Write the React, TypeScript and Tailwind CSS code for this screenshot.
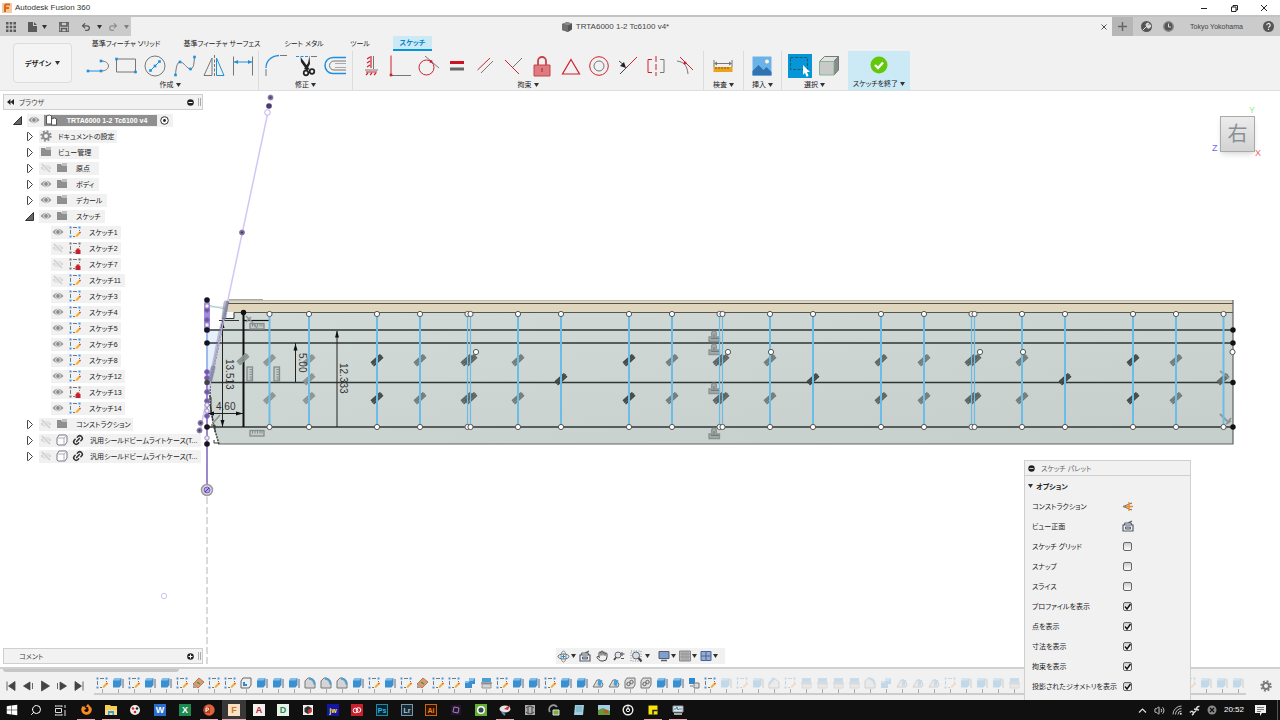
import type { ReactNode } from "react";
import { FaWindows, FaFirefoxBrowser } from "react-icons/fa";
import { Search, Volume2, Link2, Hand, Undo2, Redo2 } from "lucide-react";

const BLUE = "#1c8fe0";
const GRAY = "#777";
const RED = "#cf2030";

function Icon({ size = 24, children }: { size?: number; children: ReactNode }) {
  return (
    <svg width={size} height={size} viewBox={`0 0 ${size} ${size}`} fill="none" className="block shrink-0">
      {children}
    </svg>
  );
}

function Caret() {
  return (
    <svg width="5" height="4" viewBox="0 0 5 4" className="shrink-0">
      <path d="M0 0h5L2.5 4z" fill="#333" />
    </svg>
  );
}

function Gear({ color }: { color: string }) {
  return (
    <Icon size={12}>
      <circle cx="6" cy="6" r="3" stroke={color} strokeWidth="2" />
      <circle cx="6" cy="6" r="4.800" stroke={color} strokeWidth="1.800" strokeDasharray="1.900 1.870" />
    </Icon>
  );
}

function Dots({ points, r = 1.3, fill = BLUE }: { points: number[][]; r?: number; fill?: string }) {
  return (
    <>
      {points.map(([x, y], i) => (
        <rect key={i} x={x - r} y={y - r} width={r * 2} height={r * 2} fill={fill} />
      ))}
    </>
  );
}

/* ---------- ribbon icons ---------- */

const createIcons = [
  {
    name: "線分",
    art: (
      <>
        <path d="M3 17h13" stroke={BLUE} />
        <path d="M16 17c10 0 10-10 0-10" stroke={GRAY} />
        <Dots points={[[3, 17], [16, 17], [16, 7]]} />
      </>
    ),
  },
  {
    name: "長方形",
    art: (
      <>
        <path d="M2.500 5h19v13h-19z" stroke={GRAY} />
        <Dots points={[[2.5, 5], [21.5, 18]]} />
      </>
    ),
  },
  {
    name: "円",
    art: (
      <>
        <circle cx="12" cy="12" r="10" stroke={GRAY} />
        <path d="M7 17L17 7" stroke={BLUE} />
        <Dots points={[[7.500, 16.5], [12, 12], [16.5, 7.5]]} />
      </>
    ),
  },
  {
    name: "スプライン",
    art: (
      <>
        <path d="M2.500 21C3 14 4 8 7 8c4 0 7 7 10.500 7S21 8 21.500 3" stroke={GRAY} />
        <Dots points={[[2.5, 21], [7, 8], [17.5, 15], [21.5, 3]]} />
      </>
    ),
  },
  {
    name: "ミラー",
    art: (
      <>
        <path d="M10 4v17.500H2z" stroke={GRAY} />
        <path d="M12.500 1v22" stroke={GRAY} strokeDasharray="3 1.500" />
        <path d="M14.500 4v17.500H22z" stroke={BLUE} />
      </>
    ),
  },
  {
    name: "スケッチ寸法",
    art: (
      <>
        <path d="M2.500 2.500v19M21.500 2.500v19" stroke={GRAY} />
        <path d="M3 8h18" stroke={BLUE} />
        <path d="M3 8l4-2v4zM21 8l-4-2v4z" fill={BLUE} />
      </>
    ),
  },
];

const modifyIcons = [
  {
    name: "フィレット",
    art: (
      <>
        <path d="M2 14C2 7 7 2 15 1.500" stroke={BLUE} strokeWidth="1.300" />
        <path d="M16 1.500h7M2 15v7" stroke={GRAY} />
      </>
    ),
  },
  {
    name: "トリム",
    art: (
      <>
        <path d="M2 2.500h14" stroke={BLUE} strokeDasharray="3 1.500" />
        <path d="M17 2.500h6" stroke={GRAY} />
        <path d="M6.500 3l9 12-2.500 1.500L7 8zM15.500 2l.5 8-3.500 6-2.500-1 4-6z" fill="#222" />
        <circle cx="12" cy="19" r="2.300" stroke="#222" strokeWidth="1.700" />
        <circle cx="18" cy="17.500" r="2.300" stroke="#222" strokeWidth="1.700" />
      </>
    ),
  },
  {
    name: "オフセット",
    art: (
      <>
        <path d="M23 3.500H10a8 8 0 0 0 0 16h13" stroke={BLUE} strokeWidth="1.500" />
        <path d="M23 7H11a4.500 4.500 0 0 0 0 9h12" stroke={GRAY} />
        <path d="M23 9.500H12M23 13.500H12" stroke="#aaa" />
      </>
    ),
  },
];

const constraintIcons = [
  {
    name: "水平/垂直",
    art: (
      <>
        <path d="M14.500 2v13M6 16h13" stroke={GRAY} />
        <path d="M12 2v12M8 5l3-2M8 9l3-2M8 13l3-2M7 18h11M7 21l2-2M11 21l2-2M15 21l2-2" stroke={RED} strokeWidth="1.200" />
      </>
    ),
  },
  {
    name: "一致",
    art: (
      <>
        <path d="M3 1.500V21" stroke={RED} />
        <path d="M4 21.500h19" stroke={GRAY} />
        <Dots points={[[3, 21]]} fill={RED} />
      </>
    ),
  },
  {
    name: "接線",
    art: (
      <>
        <path d="M9 2l14 12" stroke={GRAY} />
        <circle cx="10.500" cy="13.500" r="7.500" stroke={RED} />
        <Dots points={[[15, 7.500]]} fill={RED} />
      </>
    ),
  },
  {
    name: "等しい",
    art: (
      <>
        <path d="M5 8.500h14" stroke="#cf1020" strokeWidth="3" />
        <path d="M5 15h14" stroke="#666" strokeWidth="3" />
      </>
    ),
  },
  {
    name: "平行",
    art: (
      <>
        <path d="M4.500 16L17 4" stroke={RED} />
        <path d="M8 19L20 7" stroke={GRAY} />
      </>
    ),
  },
  {
    name: "直交",
    art: (
      <>
        <path d="M11 13l9-9" stroke={GRAY} />
        <path d="M3 6l14 14" stroke={RED} />
      </>
    ),
  },
  {
    name: "固定",
    art: (
      <>
        <path d="M8 11V7a4 4 0 0 1 8 0v4" stroke="#c94048" strokeWidth="1.800" />
        <path d="M4 11h16v11H4z" fill="#dd7c80" stroke="#c94048" />
        <path d="M12 14v4" stroke="#b02030" />
      </>
    ),
  },
  { name: "中点", art: <path d="M12 5.500l8.500 14.500h-17z" stroke={RED} strokeWidth="1.200" /> },
  {
    name: "同心円",
    art: (
      <>
        <circle cx="12" cy="12" r="9.300" stroke={RED} />
        <circle cx="12" cy="12" r="5" stroke={GRAY} />
      </>
    ),
  },
  {
    name: "同一直線上",
    art: (
      <>
        <path d="M3 7l5 4M4 20l8-8" stroke="#444" />
        <path d="M10 14l-6-2 4-4z" fill="#222" />
        <path d="M12 12l9-9" stroke={RED} />
      </>
    ),
  },
  {
    name: "対称",
    art: (
      <>
        <path d="M8 5.500H4v13h4" stroke={RED} />
        <path d="M16 5.500h4v13h-4" stroke={GRAY} />
        <path d="M12 2v20" stroke={RED} strokeDasharray="6 2" />
      </>
    ),
  },
  {
    name: "曲率",
    art: (
      <>
        <path d="M4 7c6 1 10 3 11 13" stroke={GRAY} />
        <path d="M7 3l13 13" stroke={RED} />
        <Dots points={[[12, 9]]} fill={RED} />
      </>
    ),
  },
];

const inspectIcons = [
  {
    name: "計測",
    art: (
      <>
        <path d="M3 6v7M21 6v7M4 9.500h16" stroke={GRAY} />
        <path d="M3 9.500l3-2v4zM21 9.500l-3-2v4z" fill={GRAY} />
        <path d="M2.500 13h19v5h-19z" fill="#eca21c" />
        <path d="M5 13v2M8 13v2M11 13v2M14 13v2M17 13v2" stroke="#85580a" />
      </>
    ),
  },
];

const insertIcons = [
  {
    name: "キャンバス",
    art: (
      <>
        <path d="M2.500 2.500h19v19h-19z" fill="#6cb2ea" />
        <path d="M2.500 17l6-6 5 5 3-3 5 5v3.500h-19z" fill="#2f74b0" />
        <circle cx="17" cy="7.500" r="2" fill="#fff6d0" />
      </>
    ),
  },
];

const selectIcons = [
  {
    name: "選択",
    art: (
      <>
        <path d="M0 0h24v24H0z" fill="#0696d7" />
        <path d="M2.500 3.500h17v12h-17z" stroke="#0d5c78" strokeDasharray="3 1.500" />
        <path d="M15 11l7 7h-3l1.500 4-2 .8-1.500-4-2 2z" fill="#fff" />
      </>
    ),
  },
  {
    name: "ボディ",
    art: (
      <>
        <path d="M2.500 7.500l5-5h14l-4.500 5z" fill="#e2e2e2" stroke="#777" />
        <path d="M17 7.500l4.500-5v13.500l-4.500 5z" fill="#8b8b8b" stroke="#777" />
        <path d="M2.500 7.500H17V21H2.500z" fill="#c9c9c9" stroke="#80b890" />
      </>
    ),
  },
];

const groups = [
  { label: "作成", icons: createIcons, cls: "w-[177px] px-[3px]" },
  { label: "修正", icons: modifyIcons, cls: "w-[94px] px-[5px]" },
  { label: "拘束", icons: constraintIcons, cls: "w-[351px] px-[6px]" },
  { label: "検査", icons: inspectIcons, cls: "w-[40px] px-[7px]" },
  { label: "挿入", icons: insertIcons, cls: "w-[38px] px-[6px]" },
  { label: "選択", icons: selectIcons, cls: "w-[66px] pl-[6px] pr-[7px] border-r-0" },
];

const tabs = [
  { label: "基準フィーチャ ソリッド", cls: "w-[88px]" },
  { label: "基準フィーチャ サーフェス", cls: "w-[104px]" },
  { label: "シート メタル", cls: "w-[60px]" },
  { label: "ツール", cls: "w-[52px]" },
];

function TitleBar() {
  return (
    <header className="flex h-[15px] items-center bg-white pl-0.5 text-[#333]">
      <svg width="10" height="10" viewBox="0 0 10 10">
        <path d="M0 0h10v10H0z" fill="#f6c9a0" />
        <path d="M3 1.500h5M3 1.500V9M3 5h4" stroke="#d9681a" strokeWidth="2" fill="none" />
      </svg>
      <span className="ml-[3px] text-[8px] leading-none">Autodesk Fusion 360</span>
      <div className="ml-auto flex gap-5 pr-[11px]">
        <button aria-label="最小化">
          <Icon size={10}><path d="M2 5.500h6" stroke="#222" /></Icon>
        </button>
        <button aria-label="元のサイズに戻す">
          <Icon size={10}><path d="M2.500 4h4.500v4.500H2.500zM4 4V2.500h4.500V7H7" stroke="#222" /></Icon>
        </button>
        <button aria-label="閉じる">
          <Icon size={10}><path d="M2 2l6 6M8 2L2 8" stroke="#222" /></Icon>
        </button>
      </div>
    </header>
  );
}

function DocumentBar() {
  return (
    <div className="flex h-[21px] border-t-2 border-[#c3c3c3] bg-[#cbcbcb]">
      <div className="flex w-[131px] items-center pl-1.5 text-[#555]">
        <button aria-label="データパネル">
          <Icon size={10}>
            <path d="M0 0h2.500v2.500H0zM3.700 0h2.500v2.500H3.700zM7.400 0H10v2.500H7.400zM0 3.700h2.500v2.500H0zM3.700 3.700h2.500v2.500H3.700zM7.400 3.700H10v2.500H7.400zM0 7.400h2.500V10H0zM3.700 7.400h2.500V10H3.700zM7.400 7.400H10V10H7.400z" fill="#5b5b5b" />
          </Icon>
        </button>
        <button aria-label="ファイル" className="ml-3 flex items-center gap-1">
          <Icon size={10}><path d="M0 0h5v4h4v6H0zM6 0l3 3H6z" fill="#5b5b5b" /></Icon>
          <Caret />
        </button>
        <button aria-label="保存" className="ml-3">
          <Icon size={10}><path d="M0 0h10v10H0zM2 0v4h6V0M2.500 10V6.500h5V10" stroke="#5b5b5b" strokeWidth="1.600" /></Icon>
        </button>
        <button aria-label="元に戻す" className="ml-3 flex items-center gap-1.5">
          <Undo2 size={10} strokeWidth={3} />
          <Caret />
        </button>
        <button aria-label="やり直し" className="ml-1.5 flex items-center gap-1.5 opacity-50">
          <Redo2 size={10} strokeWidth={3} />
          <Caret />
        </button>
      </div>
      <div className="flex flex-1 items-center bg-[#f1f1f1] pr-1">
        <div className="flex flex-1 items-center justify-center gap-1 text-[8px] text-[#444]">
          <Icon size={10}>
            <path d="M0 2l5-2 5 1.500v6L6 10 0 8z" fill="#555" />
            <path d="M0 2l5-2 5 1.500L6 3.500z" fill="#8d8d8d" />
            <path d="M0 2l6 1.500V10L0 8z" fill="#707070" />
          </Icon>
          TRTA6000 1-2 Tc6100 v4*
        </div>
        <button aria-label="タブを閉じる">
          <Icon size={8}><path d="M1.500 1.500l5 5M6.500 1.500l-5 5" stroke="#555" /></Icon>
        </button>
      </div>
      <button aria-label="新しいタブ" className="flex w-[21px] items-center justify-center bg-[#b6b6b6]">
        <Icon size={9}><path d="M4.500 0v9M0 4.500h9" stroke="#666" strokeWidth="1.500" /></Icon>
      </button>
      <div className="flex w-[147px] items-center pl-2 text-[7px] text-[#444]">
        <button aria-label="拡張機能">
          <Icon size={11}>
            <circle cx="5.500" cy="5.500" r="5.500" fill="#555" />
            <path d="M2 9l3.500-3.500M5 3.500a2 2 0 0 1 3-1L6.500 4l.8.800L9 3.500a2 2 0 0 1-3 3z" stroke="#ddd" fill="#ddd" />
          </Icon>
        </button>
        <button aria-label="ジョブの状態" className="ml-[11px]">
          <Icon size={11}>
            <circle cx="5.500" cy="5.500" r="4.700" fill="#555" stroke="#888" strokeWidth="1.500" />
            <path d="M5.500 2.500V6H8" stroke="#ddd" />
          </Icon>
        </button>
        <span className="ml-4 whitespace-nowrap">Tokyo Yokohama</span>
        <button aria-label="ヘルプ" className="ml-auto mr-1.5">
          <Icon size={11}>
            <circle cx="5.500" cy="5.500" r="5.500" fill="#555" />
            <path d="M3.800 4.200a1.700 1.700 0 1 1 2.400 1.500q-.7.300-.7 1.100M5.500 7.800v1.200" stroke="#eee" strokeWidth="1.200" />
          </Icon>
        </button>
      </div>
    </div>
  );
}

function Ribbon() {
  return (
    <div className="flex h-[55px] border-b border-[#dedede] bg-[#f1f1f1] text-[7px] leading-none text-[#222]">
      <div className="w-[82px] pt-[7px] pl-[13px]">
        <button className="flex h-10 w-[59px] items-center justify-center gap-1 rounded-sm border border-[#dcdcdc] bg-[#f4f4f4] font-bold">
          デザイン
          <Caret />
        </button>
      </div>
      <div className="flex flex-1 flex-col">
        <nav className="flex h-[15px] items-stretch">
          {tabs.map((t) => (
            <button key={t.label} className={`text-center whitespace-nowrap ${t.cls}`}>
              {t.label}
            </button>
          ))}
          <button className="ml-[7px] w-[39px] border-b-2 border-[#0696d7] bg-[#cce9f6] font-bold whitespace-nowrap text-[#0588c8]">
            スケッチ
          </button>
        </nav>
        <div className="flex flex-1">
          {groups.map((g) => (
            <div key={g.label} className={`flex flex-col gap-[3px] border-r border-[#dcdcdc] pt-[3px] ${g.cls}`}>
              <div className="flex justify-between">
                {g.icons.map((ic) => (
                  <button key={ic.name} aria-label={ic.name}>
                    <Icon>{ic.art}</Icon>
                  </button>
                ))}
              </div>
              <button className="flex items-center justify-center gap-0.5 whitespace-nowrap">
                {g.label}
                <Caret />
              </button>
            </div>
          ))}
          <button className="flex w-[62px] flex-col items-center justify-between bg-[#cce9f6] pt-1 pb-[3px]">
            <Icon size={20}>
              <circle cx="10" cy="10" r="8.500" fill="#63c80a" />
              <path d="M6 10l3 3 5-5.500" stroke="#fff" strokeWidth="2.400" />
            </Icon>
            <span className="flex items-center gap-0.5 whitespace-nowrap">
              スケッチを終了
              <Caret />
            </span>
          </button>
        </div>
      </div>
    </div>
  );
}

/* ---------- browser tree ---------- */

function Eye({ off }: { off?: boolean }) {
  return (
    <Icon size={12}>
      <g opacity={off ? 0.3 : 1}>
        <path d="M.500 6q5.500-6.500 11 0-5.500 6.500-11 0z" fill="#999" />
        <circle cx="6" cy="6" r="2.400" fill="#8a8a8a" stroke="#eee" strokeWidth=".900" />
        {off && <path d="M2 2l8 8" stroke="#f4f4f4" strokeWidth="2.500" />}
        {off && <path d="M2 2l8 8" stroke="#777" strokeWidth="1.200" />}
      </g>
    </Icon>
  );
}

function Folder() {
  return (
    <Icon size={12}>
      <path d="M1 2h4l1 1.500h5V10H1z" fill="#8f8f8f" />
      <path d="M6 2h5" stroke="#8f8f8f" />
    </Icon>
  );
}

function SketchIcon({ locked }: { locked?: boolean }) {
  return (
    <Icon size={12}>
      <path d="M4 1.500h4M1.500 4v4M4 10.500h2M10.500 4v1" stroke="#777" />
      <Dots points={[[1.5, 1.5], [10.500, 1.5], [1.5, 10.5]]} r={1} fill={locked ? "#777" : "#3c9ee4"} />
      {locked ? (
        <path d="M6.500 8h5v4h-5zM7.500 8V6.500h3V8" fill="#c8202c" />
      ) : (
        <>
          <path d="M6.500 11l.500-2L10 6 11.500 7.500 8.500 10.500z" fill="#f4b030" />
          <path d="M10.500 6l1 1" stroke="#e04040" strokeWidth="1.500" />
        </>
      )}
    </Icon>
  );
}

function Twisty({ open }: { open?: boolean }) {
  return (
    <Icon size={9}>
      {open ? (
        <path d="M8.500 .500v8H.500z" fill="#666" stroke="#333" />
      ) : (
        <path d="M2.500 .500h1L7.500 4.500l-4 4h-1z" fill="#fff" stroke="#444" />
      )}
    </Icon>
  );
}

type Row = { id: string; label: string; kind: string; eye?: string; open?: boolean; cls: string };

const branches: Row[] = [
  { id: "doc", label: "ドキュメントの設定", kind: "gear", cls: "w-[78px]" },
  { id: "views", label: "ビュー管理", kind: "folder", cls: "w-[60px]" },
  { id: "origin", label: "原点", kind: "folder", eye: "off", cls: "w-[60px]" },
  { id: "bodies", label: "ボディ", kind: "folder", eye: "on", cls: "w-[60px]" },
  { id: "decals", label: "デカール", kind: "folder", eye: "on", cls: "w-[68px]" },
  { id: "sketches", label: "スケッチ", kind: "folder", eye: "on", open: true, cls: "w-[66px]" },
];

const sketches = [
  { n: 1 },
  { n: 2, off: true, locked: true },
  { n: 7, off: true, locked: true },
  { n: 11, off: true },
  { n: 3 },
  { n: 4 },
  { n: 5 },
  { n: 6 },
  { n: 8 },
  { n: 12 },
  { n: 13, locked: true },
  { n: 14 },
];

const components: Row[] = [
  { id: "construction", label: "コンストラクション", kind: "folder", eye: "off", cls: "w-[94px]" },
  { id: "case1", label: "汎用シールドビームライトケース(T...", kind: "body", eye: "off", cls: "w-[162px]" },
  { id: "case2", label: "汎用シールドビームライトケース(T...", kind: "body", eye: "off", cls: "w-[162px]" },
];

function Branch({ row }: { row: Row }) {
  return (
    <li className="flex h-4 items-center pl-[25px]">
      <button aria-label={`${row.label}を展開`}>
        <Twisty open={row.open} />
      </button>
      <div className={`ml-[5px] flex h-[13px] items-center gap-1 bg-[#f1f1f1] pl-px whitespace-nowrap ${row.cls}`}>
        {row.eye && <Eye off={row.eye === "off"} />}
        {row.kind === "gear" && <Gear color="#8c8c8c" />}
        {row.kind === "folder" && <Folder />}
        {row.kind === "body" && (
          <>
            <Icon size={12}>
              <path d="M1 4l2-3h7l1 1v6l-2 3H2L1 10z" fill="#fff" stroke="#778" />
              <path d="M1.500 4H8l3-2.500M8 4v6.500" stroke="#aab" />
            </Icon>
            <Link2 size={12} strokeWidth={3} color="#333" className="-rotate-45" />
          </>
        )}
        <span className={row.eye && row.kind === "folder" ? "pl-1" : "pl-0.5"}>{row.label}</span>
      </div>
    </li>
  );
}

function PanelHeader({ label, collapse, plus }: { label: string; collapse?: boolean; plus?: boolean }) {
  return (
    <div className="ml-[3px] flex h-4 w-[200px] items-center border border-[#cfcfcf] bg-[#f2f2f2] text-[7px] text-[#444]">
      <span className="w-[15px] pl-[3px]">
        {collapse && (
          <svg width="7" height="6" viewBox="0 0 7 6">
            <path d="M3.500 0v6L0 3zM7 0v6L3.500 3z" fill="#222" />
          </svg>
        )}
      </span>
      {label}
      <button aria-label={`${label}の表示`} className="ml-auto">
        <Icon size={7}>
          <circle cx="3.500" cy="3.500" r="3.300" fill="#222" />
          <path d={plus ? "M1.500 3.500h4M3.500 1.500v4" : "M1.500 3.500h4"} stroke="#fff" />
        </Icon>
      </button>
      <span className="mr-px ml-1 h-2 w-[3px] border-x border-[#aaa]" />
    </div>
  );
}

function Browser() {
  return (
    <aside className="w-[203px] pt-[3px] text-[7px] text-[#222]">
      <PanelHeader label="ブラウザ" collapse />
      <ul className="pt-0.5">
        <li className="flex h-4 items-center pl-[13px]">
          <button aria-label="ルートを展開">
            <Twisty open />
          </button>
          <div className="ml-[5px] flex h-[13px] w-[146px] items-center bg-[#f1f1f1] pl-px">
            <Eye />
            <span className="ml-1 flex h-[11px] w-[113px] items-center bg-[#8f8f8f] pl-px font-bold whitespace-nowrap text-white">
              <Icon size={12}>
                <path d="M1.500 2l3-1 2 1v8h-5zM6.500 5l3-1 2 1v6h-5z" fill="#fff" stroke="#555" />
              </Icon>
              <span className="flex-1 text-center">TRTA6000 1-2 Tc6100 v4</span>
            </span>
            <span className="ml-[3px]">
              <Icon size={9}>
                <circle cx="4.500" cy="4.500" r="3.800" fill="#fff" stroke="#333" />
                <circle cx="4.500" cy="4.500" r="1.400" fill="#222" />
              </Icon>
            </span>
          </div>
        </li>
        {branches.map((b) => (
          <Branch key={b.id} row={b} />
        ))}
        {sketches.map((s) => (
          <li key={s.n} className="flex h-4 items-center pl-[51px]">
            <div className={`flex h-[13px] items-center gap-[5px] bg-[#f1f1f1] pl-px whitespace-nowrap ${s.n > 9 ? "w-[74px]" : "w-[70px]"}`}>
              <Eye off={s.off} />
              <SketchIcon locked={s.locked} />
              <span className="pl-[3px]">スケッチ{s.n}</span>
            </div>
          </li>
        ))}
        {components.map((c) => (
          <Branch key={c.id} row={c} />
        ))}
      </ul>
    </aside>
  );
}

/* ---------- drawing ---------- */

const strings = [
  269.5, 309, 377, 420, 467.5, 470.5, 518, 561, 629, 672, 719.5, 722.5, 770, 813, 881, 924, 971.5, 974.5, 1022, 1065,
  1133, 1176, 1223.5,
];
const thin = [467.5, 470.5, 719.5, 722.5, 971.5, 974.5];

const pair = (xs: number[], color: string) =>
  xs.flatMap((x) => [
    { x, y: 360, color },
    { x, y: 398, color },
  ]);

const parallels = [
  { x: 243, y: 359, color: "#8b9391" },
  { x: 309, y: 379, color: "#8b9391" },
  ...pair([269.5, 309], "#8b9391"),
  ...pair([420, 518, 672, 770, 924, 1022, 1176], "#717978"),
  ...pair([467, 471, 719, 723, 881, 971, 975], "#5b6261"),
  ...pair([377, 629, 1133], "#3f4545"),
  { x: 561, y: 379, color: "#3f4545" },
  { x: 813, y: 379, color: "#3f4545" },
  { x: 1065, y: 379, color: "#3f4545" },
  { x: 1223, y: 379, color: "#5f6665" },
];

function Parallel({ x, y, color }: { x: number; y: number; color: string }) {
  return (
    <g transform={`translate(${x} ${y})`} stroke={color} strokeLinecap="round">
      <path d="M-4.500 4L4.500 -4" strokeWidth="5.500" strokeLinecap="butt" opacity="0.6" />
      <path d="M-5.500 2.500L3 -5M-4.500 4L4.500 -4M-3 5.500L5.500 -2.500" strokeWidth="1.600" />
    </g>
  );
}

function Ruler({ x, y, vertical }: { x: number; y: number; vertical?: boolean }) {
  return (
    <g transform={`translate(${x} ${y})${vertical ? " rotate(90)" : ""}`} stroke="#858d8c">
      <rect x="-7" y="-2.500" width="14" height="5.500" fill="#c3cac8" strokeWidth="1.300" />
      <path d="M-4.500 -2v2.500M-2 -2v2.500M.500 -2v2.500M3 -2v2.500M5 -2v2.500" />
    </g>
  );
}

function Drawing() {
  return (
    <svg className="absolute inset-0 h-full w-full" viewBox="0 91 1280 576" fill="none">
      <defs>
        <linearGradient id="glass" x1="0" y1="0" x2="1" y2="1">
          <stop offset="0" stopColor="#d3dbd9" />
          <stop offset="1" stopColor="#c6cecb" />
        </linearGradient>
      </defs>
      <path d="M207 497V667" stroke="#b5b5b5" strokeDasharray="7 3" />
      <path d="M207 330h16l-14 55-2 40z" fill="#e6f0fa" />
      <path d="M228 301H1233V312H225z" fill="#e0d6be" />
      <path d="M229 300.500H1233" stroke="#bdbcae" />
      <path d="M225 313l10 0V312H1233V444H218l-8-30-1-30 16-64z" fill="url(#glass)" />
      <path d="M224 312.500h10v6h-12z" fill="#f8f8f6" />
      <path d="M229 299.500h34" stroke="#aaa" />
      <path d="M227 303.500H1233M234 312.500H1233" stroke="#555" strokeWidth="1.200" />
      <path d="M218 444H1233V300" stroke="#5d6363" strokeWidth="1.200" />
      <path d="M228 301l-18 84 0 20 4 22 5 17" stroke="#444" strokeWidth="1.500" strokeDasharray="2 1" />
      <path d="M234 312.500v6h-12M219 320.500h20M209 397h2v18M211 425h4v7M214 440v3h4M210 404l3 16" stroke="#333" />
      <path d="M207 330H1233M207 343H1233M207 382.500H1233M207 427H1233" stroke="#2e3737" strokeWidth="1.500" />
      <path d="M243.500 312V427" stroke="#111" strokeWidth="2" />
      <path d="M243 320.500h26" stroke="#111" strokeWidth="1.200" />
      <path d="M210 307h36" stroke="#eccfae" />
      <path d="M208 305l20 5" stroke="#8cd0ee" />

      {parallels.map((p, i) => (
        <Parallel key={i} {...p} />
      ))}
      {[337, 350, 389, 434].map((y) => (
        <g key={y} transform={`translate(714 ${y})`} opacity="0.8">
          <path d="M-5 0h3q-1.500-6 2-6t2 6h3.500v4.500H-5z" fill="#9aa2a1" stroke="#7b8382" strokeWidth="1.300" />
          <path d="M-3 1.500h8M0 -3v4" stroke="#5b6362" />
        </g>
      ))}
      <Ruler x={257} y={326} />
      <Ruler x={257} y={433} />
      <Ruler x={250} y={374} vertical />
      <Ruler x={277} y={374} vertical />
      <path d="M246 316l6 6 5 6M246 322l5-5M213 423l7-8" stroke="#8d9594" strokeWidth="1.500" />
      <path d="M1220 371l9 7M1220 414l8 8 3-4M1226 424l5-3" stroke="#8d9594" strokeWidth="1.800" />

      {/* projected strings */}
      {strings.map((x) => (
        <path key={x} d={`M${x} 314V427`} stroke="#6bbce6" strokeWidth={thin.includes(x) ? 1.2 : 2} />
      ))}
      {strings.flatMap((x) => [
        <circle key={`${x}t`} cx={x} cy="314" r="2.600" fill="#fff" stroke="#555" />,
        <circle key={`${x}b`} cx={x} cy="427" r="2.600" fill="#fff" stroke="#555" />,
      ])}
      {[476, 728, 771, 980, 1023, 1232.5].map((x) => (
        <circle key={x} cx={x} cy="352" r="2.600" fill="#fff" stroke="#555" />
      ))}
      {[330, 343, 382.5, 427].map((y) => (
        <circle key={y} cx="1233" cy={y} r="2.700" fill="#111" />
      ))}
      <circle cx="243.500" cy="312.500" r="2.700" fill="#111" />

      {/* dimensions */}
      <path d="M222.500 321V427M295.500 343V382M337 331V427M208 413.500H243" stroke="#222" />
      <path
        d="M222.500 321l-2 7h4zM222.500 427l-2-7h4zM295.500 343.500l-2 7h4zM337 330.500l-2 7h4zM207 413.500l7-2v4zM243 413.500l-7-2v4z"
        fill="#111"
      />
      <g fill="#333" fontSize="10">
        <text transform="translate(226 359) rotate(90)">13.513</text>
        <text transform="translate(299 353) rotate(90)">5.00</text>
        <text transform="translate(340 363) rotate(90)">12.333</text>
        <text x="216" y="410">4.60</text>
      </g>

      {/* projected construction geometry */}
      <path d="M268 112L200 431" stroke="#d3c6f5" strokeWidth="1.500" />
      <path d="M228 301l-8 30-10 50" stroke="#6e7191" strokeWidth="3" opacity="0.4" />
      <path d="M226 303l-2 14M213 368l-3 12" stroke="#6e7191" strokeWidth="5" strokeLinecap="round" opacity="0.5" />
      <path d="M207 300V490" stroke="#9d88cc" strokeWidth="2" />
      <path d="M207 331V370" stroke="#9db9ee" strokeWidth="2" />
      <path d="M207 304V330" stroke="#a48cdc" strokeWidth="6" strokeLinecap="round" />
      {[310, 320, 372, 378, 392, 401, 416].map((y) => (
        <circle key={y} cx="207" cy={y} r="2.400" fill="#6d5a94" stroke="#8a6bd0" />
      ))}
      {[306, 325, 405, 411, 438].map((y) => (
        <circle key={y} cx="207" cy={y} r="2.200" fill="#eee" stroke="#9a86c8" />
      ))}
      {[300, 330, 343, 427, 444].map((y) => (
        <circle key={y} cx="207" cy={y} r="2.800" fill="#17131f" />
      ))}
      <circle cx="207" cy="382.500" r="2.700" fill="#444" />
      {[[270.500, 97.500], [242, 232.500], [200.500, 423], [199.500, 430.500]].map(([x, y]) => (
        <g key={y}>
          <circle cx={x} cy={y} r="2.500" fill="#74689a" stroke="#8c7fae" />
          <circle cx={x} cy={y} r="1" fill="#413a58" />
        </g>
      ))}
      <circle cx="269" cy="106" r="2.800" fill="#4c3a70" />
      <circle cx="267.500" cy="112.500" r="2.800" fill="#fff" stroke="#c3a9f2" />
      <circle cx="207" cy="490" r="5.500" fill="#ddd" stroke="#9a9a9a" strokeWidth="1.500" />
      <circle cx="207" cy="490" r="3" fill="#b9a0ea" stroke="#7d59c9" />
      <path d="M205 492l4-4" stroke="#5b3ea0" />
      <circle cx="164" cy="596" r="2.700" stroke="#cfc0f4" />
    </svg>
  );
}

function ViewCube() {
  return (
    <div className="relative mt-[25px] mr-[25px] h-9 w-[35px] text-[9px] leading-none">
      <button className="h-9 w-[35px] border border-[#aaa] bg-linear-to-b from-[#ececec] to-[#d3d3d3] text-[20px] leading-none text-[#8a8f96] shadow-md">
        右
      </button>
      <span className="absolute -top-2.5 right-0 text-[#8df08d]">Y</span>
      <span className="absolute -bottom-px -left-2 text-[#6a6af0]">Z</span>
      <span className="absolute -right-1.5 -bottom-1.5 text-[#f06a6a]">X</span>
    </div>
  );
}

function HomeView() {
  return (
    <Icon size={12}>
      <path d="M1 5h10v6H1zM2 5l1-2h6l1 2M6 3l4-2" stroke="#555d6b" strokeWidth="1.200" />
      <path d="M3.500 7h5v2h-5z" fill="#bcc7da" stroke="#555d6b" />
    </Icon>
  );
}

function NavBar() {
  return (
    <div className="flex h-4 w-[169px] items-center bg-[#f1f1f1] pl-px text-[#444]">
      <button aria-label="オービット" className="flex items-center gap-px">
        <Icon size={13}>
          <ellipse cx="6.500" cy="6.500" rx="5.500" ry="2.500" stroke="#666" />
          <ellipse cx="6.500" cy="6.500" rx="2.500" ry="5.500" stroke="#888" />
          <path d="M4.500 6.500h4M6.500 4.500v4" stroke={BLUE} />
        </Icon>
        <Caret />
      </button>
      <button aria-label="ビュー正面" className="ml-[3px]"><HomeView /></button>
      <button aria-label="画面移動" className="ml-[5px]"><Hand size={12} /></button>
      <button aria-label="ズーム" className="ml-[5px]">
        <Icon size={12}>
          <circle cx="5" cy="5" r="3" fill="#dde6f2" stroke="#666" />
          <path d="M3 7.500L1 10" stroke="#444" strokeWidth="1.800" />
          <path d="M9 2v4M7.500 4h4M8 8.500h3" stroke="#555" />
        </Icon>
      </button>
      <button aria-label="ウィンドウズーム" className="ml-[5px] flex items-center gap-0.5">
        <Icon size={13}>
          <path d="M1 1h10v10H1z" stroke="#888" strokeDasharray="1 1.500" />
          <circle cx="6" cy="5.500" r="3.500" fill="#d5dfec" stroke="#666" />
          <path d="M8.500 8l3 3.500" stroke="#444" strokeWidth="2" />
        </Icon>
        <Caret />
      </button>
      <button aria-label="表示設定" className="ml-2 flex items-center gap-px">
        <Icon size={12}>
          <path d="M1 1.500h10v7H1z" fill="#7f9fce" stroke="#555d6b" />
          <path d="M3 10.500h6" stroke="#555d6b" strokeWidth="1.500" />
        </Icon>
        <Caret />
      </button>
      <button aria-label="グリッドとスナップ" className="ml-[3px] flex items-center gap-px">
        <Icon size={12}>
          <path d="M.500 1h11v10H.500z" fill="#bbb" stroke="#888" />
          <path d="M3 1v10M5 1v10M7 1v10M9 1v10M1 4h10M1 7h10" stroke="#888" strokeWidth=".600" />
        </Icon>
        <Caret />
      </button>
      <button aria-label="ビューポート" className="ml-[3px] flex items-center gap-px">
        <Icon size={12}>
          <path d="M1 1.500h10v9H1zM6 1.500v9M1 6h10" fill="#93acd3" stroke="#4b6590" />
        </Icon>
        <Caret />
      </button>
    </div>
  );
}

/* ---------- sketch palette ---------- */

const options = [
  { id: "grid", label: "スケッチ グリッド", on: false },
  { id: "snap", label: "スナップ", on: false },
  { id: "slice", label: "スライス", on: false },
  { id: "profile", label: "プロファイルを表示", on: true },
  { id: "points", label: "点を表示", on: true },
  { id: "dims", label: "寸法を表示", on: true },
  { id: "constraints", label: "拘束を表示", on: true },
  { id: "projected", label: "投影されたジオメトリを表示", on: true },
];

function SketchPalette() {
  return (
    <section className="absolute right-[89px] bottom-0 h-[240px] w-[167px] border border-b-0 border-[#cfcfcf] bg-[#f1f1f1] text-[7px] text-[#222]">
      <h2 className="flex h-[15px] items-center gap-1.5 border-b border-[#cfcfcf] pl-[3px] text-[#666]">
        <Icon size={7}>
          <circle cx="3.500" cy="3.500" r="3.200" fill="#222" />
          <path d="M1.500 3.500h4" stroke="#ccc" />
        </Icon>
        スケッチ パレット
      </h2>
      <h3 className="flex h-5 items-center gap-[3px] pl-[3px] font-bold">
        <Caret />
        オプション
      </h3>
      <div className="flex h-5 items-center pl-[7px]">
        <span className="w-[90px]">コンストラクション</span>
        <button aria-label="コンストラクション">
          <Icon size={11}>
            <path d="M10 2L1 5.500 10 9" stroke="#666" />
            <path d="M3 5.500h8M7 1v9" stroke="#f08c1a" strokeWidth="1.300" />
          </Icon>
        </button>
      </div>
      <div className="flex h-5 items-center pl-[7px]">
        <span className="w-[90px]">ビュー正面</span>
        <button aria-label="ビュー正面"><HomeView /></button>
      </div>
      {options.map((o) => (
        <div key={o.id} className="flex h-5 items-center pl-[7px]">
          <label htmlFor={o.id} className="w-[91px] whitespace-nowrap">
            {o.label}
          </label>
          <span className="grid">
            <input
              id={o.id}
              type="checkbox"
              defaultChecked={o.on}
              className="peer size-[9px] appearance-none rounded-xs border border-[#666] bg-linear-to-b from-[#ccc] to-white [grid-area:1/1]"
            />
            <svg className="pointer-events-none hidden size-[9px] peer-checked:block [grid-area:1/1]" viewBox="0 0 9 9" fill="none">
              <path d="M2 4.500l2 2.500L7.500 2" stroke="#111" strokeWidth="1.400" />
            </svg>
          </span>
        </div>
      ))}
    </section>
  );
}

/* ---------- timeline ---------- */

// s sketch, e extrude, p plane, h shell, f fillet, c combine, x split, m mirror, l pattern, v move, k chamfer
const history = "seseespssheeefffese" + "spsscxseeseemmlleevs";
const suppressed = "eseksxxxxfcmmmseeex" + "eeseeseese" + "seee";

function Feature({ kind }: { kind: string }) {
  switch (kind) {
    case "e":
      return (
        <Icon size={12}>
          <path d="M1 3.500L3 1h6.500v7l-2 2.500H1z" fill="#3b8fd0" />
          <path d="M1 3.500L3 1h6.500l-2 2.500z" fill="#7ec0ee" />
          <path d="M11 2v7M10 10h2" stroke="#666" />
        </Icon>
      );
    case "p":
      return (
        <Icon size={12}>
          <path d="M1 7l6-6 5 4-6 6z" fill="#dc9a70" stroke="#b87850" />
          <path d="M5 5l3 2" stroke="#3a9a50" strokeWidth="1.500" />
          <path d="M1 8v3h4" fill="#999" />
        </Icon>
      );
    case "h":
      return (
        <Icon size={12}>
          <path d="M1 4l2-3h8v7l-2 3H1z" fill="#eee" stroke="#666" />
          <path d="M3 5v4h4V7H5V5z" fill="#2d8ad0" />
        </Icon>
      );
    case "f":
      return (
        <Icon size={12}>
          <path d="M1 11V4l3-3h2q5 1 5 6v4z" fill="#d5d5d5" stroke="#777" />
          <path d="M5 1.500q5 .500 5.500 6" stroke="#4a9fd8" strokeWidth="2" />
        </Icon>
      );
    case "k":
      return (
        <Icon size={12}>
          <path d="M1 11V7l5-6 5 4v6z" fill="#ddd" stroke="#777" />
          <path d="M1 7l5-6" stroke="#4a9fd8" strokeWidth="2.500" />
        </Icon>
      );
    case "c":
      return (
        <Icon size={12}>
          <path d="M1 4h4V1h6v6H8v4H1z" fill="#3b8fd0" />
          <path d="M1 4h4V1h6L9 4H6L4 6H1z" fill="#7ec0ee" />
        </Icon>
      );
    case "x":
      return (
        <Icon size={12}>
          <path d="M2 1h9v4H2z" fill="#4a9fd8" />
          <path d="M2 7h9v4H2z" fill="#d5d5d5" stroke="#999" />
          <path d="M1 6h11" stroke="#555" />
        </Icon>
      );
    case "m":
      return (
        <Icon size={12}>
          <path d="M1 10l4-7h3l3 4-1 3z" fill="#ddd" stroke="#777" />
          <path d="M6.500 2l4 1.500-2 6-3-1.500z" fill="#4a9fd8" />
        </Icon>
      );
    case "l":
      return (
        <Icon size={12}>
          <path d="M1 4l2-3h8v7l-2 3H1z" fill="#ddd" stroke="#777" />
          <circle cx="4.500" cy="7" r="1.700" stroke="#666" />
          <circle cx="7.500" cy="5" r="1.700" stroke="#666" />
        </Icon>
      );
    case "v":
      return (
        <Icon size={12}>
          <path d="M1 1h6v6H1z" fill="#2d8ad0" />
          <path d="M6 6h5v5H6zM2 9h3" fill="#ddd" stroke="#777" />
        </Icon>
      );
    default:
      return <SketchIcon />;
  }
}

const playback = [
  { name: "先頭へ", d: "M2 1.500v9M10 1.500v9L3.500 6z" },
  { name: "前へ", d: "M8 2v8L1.500 6zM10.500 3v6" },
  { name: "再生", d: "M2.500 1v10L10.500 6z" },
  { name: "次へ", d: "M4 2v8l6.500-4zM1.500 3v6" },
  { name: "末尾へ", d: "M2 1.500v9L8.500 6zM10 1.500v9" },
];

function Timeline() {
  return (
    <footer className="h-[33px] border-t-2 border-[#d0d0d0] bg-[#f1f1f1]">
      <div className="ml-[3px] h-[3px] w-[176px] rounded-b-sm bg-[#c6c6c6]" />
      <div className="flex items-start pt-[5px]">
        <div className="flex w-[94px] shrink-0 gap-[5px] pt-[3px] pl-[5px]">
          {playback.map((p) => (
            <button key={p.name} aria-label={p.name}>
              <Icon size={12}><path d={p.d} fill="#444" stroke="#444" strokeWidth=".800" /></Icon>
            </button>
          ))}
        </div>
        <ol className="flex overflow-hidden">
          {[...(history + suppressed)].map((k, i) => (
            <li key={i} className="flex h-[18px] w-4 shrink-0 flex-col items-center justify-between border-b-2 border-[#cdcdcd]">
              <span className={i >= history.length ? "opacity-25" : ""}>
                <Feature kind={k} />
              </span>
              <span className="h-1 w-px bg-[#aaa]" />
            </li>
          ))}
        </ol>
        <button aria-label="タイムライン設定" className="mt-[3px] mr-2 ml-auto shrink-0">
          <Gear color="#7a7a7a" />
        </button>
      </div>
    </footer>
  );
}

/* ---------- taskbar ---------- */

function Tile({ bg, color, text, border }: { bg: string; color: string; text: string; border?: string }) {
  return (
    <svg width="12" height="12" viewBox="0 0 12 12">
      <rect x=".500" y=".500" width="11" height="11" fill={bg} stroke={border ?? bg} />
      <text x="6" y="9" textAnchor="middle" fontSize={text.length > 1 ? 7 : 9} fontWeight="bold" fill={color}>
        {text}
      </text>
    </svg>
  );
}

const apps = [
  { name: "Firefox", run: true, art: <FaFirefoxBrowser size={11} color="#ff8a1e" /> },
  { name: "エクスプローラー", run: true, art: <Icon size={12}><path d="M0 1h5l1 1h6v9H0z" fill="#f8ce54" /><path d="M0 6h12v5H0z" fill="#fadf8a" /><path d="M3 11V7h6v4H7.500V9h-3v2z" fill="#3e9be0" /></Icon> },
  { name: "Slack", art: <Icon size={12}><circle cx="6" cy="6" r="5" fill="#eee" /><circle cx="4" cy="4.500" r="1.300" fill="#d22" /><circle cx="8" cy="4.500" r="1.300" fill="#222" /><circle cx="6" cy="8" r="1.300" fill="#d22" /></Icon> },
  { name: "Word", art: <Tile bg="#2b6fce" color="#fff" text="W" /> },
  { name: "Excel", art: <Tile bg="#1d8a50" color="#fff" text="X" /> },
  { name: "PowerPoint", run: true, art: <Icon size={12}><circle cx="6" cy="6" r="5.700" fill="#e0623c" /><path d="M1 3h6v6H1z" fill="#b93a1e" /><path d="M3 8V4h1.500a1 1 0 0 1 0 2.200H3" stroke="#fff" /></Icon> },
  { name: "Fusion 360", run: true, active: true, art: <Tile bg="#f9e3c8" color="#d9761c" text="F" /> },
  { name: "AutoCAD", art: <Tile bg="#f4f0f0" color="#c02030" text="A" /> },
  { name: "DraftSight", art: <Tile bg="#e8f2ea" color="#2a8a4c" text="D" /> },
  { name: "3D ビューアー", art: <Icon size={12}><path d="M1 1h10v10H1z" fill="#eee" /><path d="M6 2l3.500 2v4L6 10 2.500 8V4z" fill="#333" /><path d="M6 6l3.500-2v4L6 10z" fill="#d03030" /></Icon> },
  { name: "Jw_cad", art: <Tile bg="#1515a8" color="#ffee20" text="jw" /> },
  { name: "Creative Cloud", art: <Icon size={12}><path d="M0 0h12v12H0z" fill="#c8202c" /><circle cx="4.500" cy="6.500" r="2.300" stroke="#fff" /><circle cx="7.500" cy="6" r="2.300" stroke="#fff" /></Icon> },
  { name: "Photoshop", art: <Tile bg="#06222e" color="#30b8e0" text="Ps" border="#1d8aa8" /> },
  { name: "Lightroom", art: <Tile bg="#1a2a36" color="#a8c8dc" text="Lr" border="#7896a8" /> },
  { name: "Illustrator", art: <Tile bg="#301400" color="#f08020" text="Ai" border="#c8661a" /> },
  { name: "Pixel", art: <Icon size={12}><path d="M1 1h10v10H1z" fill="#24142e" /><path d="M4 3l5 1-1 5-5-1z" stroke="#a080b8" /></Icon> },
  { name: "Camtasia", art: <Icon size={12}><path d="M0 0h12v12H0z" fill="#62b030" /><circle cx="6" cy="6" r="3.300" fill="#345" stroke="#fff" strokeWidth="1.500" /></Icon> },
  { name: "ペイント", run: true, art: <Icon size={12}><ellipse cx="6" cy="5" rx="5.500" ry="3.500" fill="#e8e4e4" /><path d="M5 5l6-4-2 5z" fill="#d03038" /><path d="M3 8l3 3" stroke="#5a90c8" strokeWidth="2" /></Icon> },
  { name: "設定ツール", art: <Icon size={12}><path d="M1 1h10v10H1z" fill="#aaa" /><path d="M2 4q4-4 8 0M2 8q4 4 8 0M4 3v6M8 3v6" stroke="#444" /></Icon> },
  { name: "ヘッドセット", art: <Icon size={12}><path d="M2 8a4 4 0 1 1 7-5" stroke="#999" strokeWidth="1.800" /><path d="M5 6h6v5H5z" fill="#78b040" stroke="#ddd" /></Icon> },
  { name: "メモ帳", art: <Icon size={12}><path d="M2 1h9l-1 10H1z" fill="#9fd0e0" /><path d="M3 3h6M3 5h6M3 7h6" stroke="#5898b0" strokeWidth=".700" /></Icon> },
  { name: "フォト", art: <Icon size={12}><path d="M0 1h12v10H0z" fill="#a8cdea" /><path d="M0 6l5-2 7 3v4H0z" fill="#6a9838" /><path d="M6 6h4v3H6z" fill="#b85a30" /></Icon> },
  { name: "レコーダー", art: <Icon size={12}><circle cx="6" cy="6" r="4.800" stroke="#eee" strokeWidth="1.400" /><circle cx="6" cy="6" r="1.700" stroke="#eee" /><path d="M6 6V1" stroke="#eee" /></Icon> },
  { name: "付箋", run: true, art: <Icon size={12}><path d="M1.500 1.500h9v9h-9z" fill="#f8e408" /><path d="M6 10.500V6.500h4.500" stroke="#222" strokeWidth="1.500" /></Icon> },
  { name: "モニター", run: true, art: <Icon size={12}><path d="M1 2h10v6H1z" fill="#d8e8ee" stroke="#999" /><path d="M2 5h2l1-2 1 3 1-1h3" stroke="#3a8ab0" /><path d="M2 9h8v2H2z" fill="#aaa" /></Icon> },
];

function Taskbar() {
  return (
    <div className="flex h-5 items-stretch bg-[#101010] text-white">
      <div className="flex w-[74px] items-center">
        <button aria-label="スタート" className="flex w-6 justify-center"><FaWindows size={12} /></button>
        <button aria-label="検索" className="flex w-6 justify-center"><Search size={12} className="-scale-x-100" /></button>
        <button aria-label="タスクビュー" className="flex w-6 justify-center">
          <Icon size={11}><path d="M0 2V.500M7 2V.500M0 9v1.500M7 9v1.500M.500 3.500h6v4h-6zM10 0v3M10 5v6M0 1h7M0 10h7" stroke="#ddd" /></Icon>
        </button>
      </div>
      <div className="flex w-[616px] justify-between">
        {apps.map((a) => (
          <button key={a.name} aria-label={a.name} className={`flex w-6 flex-col items-center justify-between ${a.active ? "bg-[#383838]" : ""}`}>
            <span className="pt-1">{a.art}</span>
            {a.run && <span className={`h-px bg-[#e8a8b0] ${a.active ? "w-6" : "w-[18px]"}`} />}
          </button>
        ))}
      </div>
      <div className="ml-auto flex items-center gap-[7px] text-[7px]">
        <Icon size={9}><path d="M1 6.500l3.500-3.500L8 6.500" stroke="#ddd" strokeWidth="1.200" /></Icon>
        <Volume2 size={11} color="#ddd" />
        <Icon size={10}>
          <path d="M1 9.500A8.500 8.500 0 0 1 9.500 1M3.500 9.500a6 6 0 0 1 6-6M6 9.500A3.500 3.500 0 0 1 9.500 6" stroke="#bbb" />
          <circle cx="8.800" cy="8.800" r="1" fill="#ddd" />
        </Icon>
        <Icon size={11}>
          <path d="M1 7.500q1.500-2 3-.5t-1 3M4 8q3-1 3.500-4t3-2.500M5 4l5 1" stroke="#ddd" strokeWidth="1.500" />
        </Icon>
        <Icon size={10}>
          <circle cx="5" cy="5" r="4.500" fill="#888" />
          <path d="M3 3l4 4M7 3L3 7" stroke="#111" strokeWidth="1.300" />
        </Icon>
        <time className="text-[8px]">20:52</time>
        <button aria-label="通知" className="ml-1">
          <Icon size={11}>
            <path d="M0 0h11v8H7l-2 3V8H0z" fill="#eee" />
            <path d="M2 2.500h7M2 4.500h7M2 6.500h4" stroke="#555" strokeWidth=".800" />
          </Icon>
        </button>
        <span className="mr-0.5 ml-1 h-5 w-px bg-[#555]" />
      </div>
    </div>
  );
}

export default function App() {
  return (
    <div className="flex min-h-screen flex-col bg-white font-['Liberation_Sans','Noto_Sans_CJK_JP',sans-serif] leading-none [font-feature-settings:'palt']">
      <TitleBar />
      <DocumentBar />
      <Ribbon />
      <main className="relative flex flex-1 flex-col">
        <div className="relative flex flex-1 flex-col justify-between">
          <Drawing />
          <div className="relative flex items-start justify-between">
            <Browser />
            <ViewCube />
          </div>
          <div className="relative flex items-end justify-center pb-[3px]">
            <div className="flex-1">
              <PanelHeader label="コメント" plus />
            </div>
            <NavBar />
            <div className="flex-1" />
          </div>
        </div>
        <Timeline />
        <SketchPalette />
      </main>
      <Taskbar />
    </div>
  );
}
